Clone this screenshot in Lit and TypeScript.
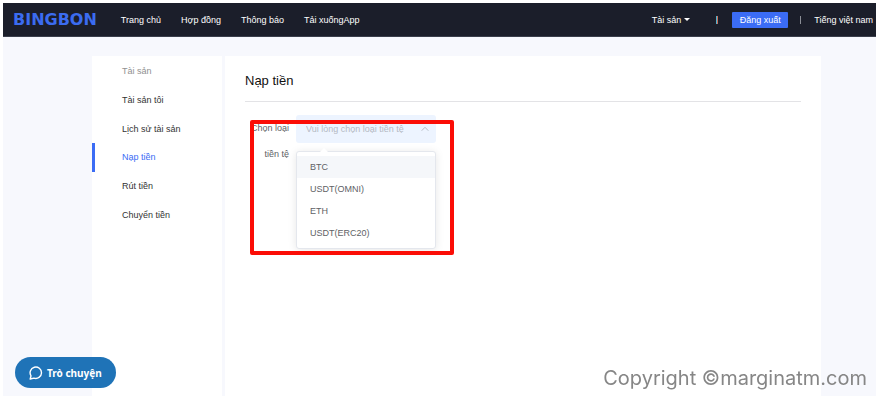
import { LitElement, html, css } from "lit";
import { customElement, state } from "lit/decorators.js";

@customElement("top-bar")
class TopBar extends LitElement {
  static styles = css`
    :host {
      display: block;
      background: #1b1e2a;
      border-bottom: 1px solid #3a3e4b;
    }
    header {
      display: flex;
      align-items: center;
      height: 33px;
      padding: 0 3px 0 10px;
      white-space: nowrap;
    }
    a {
      color: #fff;
      text-decoration: none;
    }
    .logo {
      font: 700 16px/18px "DejaVu Sans", sans-serif;
      color: #3b6cf0;
    }
    nav {
      display: flex;
      gap: 20px;
      margin-left: 24px;
    }
    .account {
      display: flex;
      align-items: center;
      margin-left: auto;
    }
    .menu {
      display: flex;
      align-items: center;
      gap: 3px;
    }
    .caret {
      border: 3px solid transparent;
      border-top-color: #fff;
      border-bottom: 0;
    }
    .bar {
      width: 1px;
      height: 8px;
      background: #8b8e96;
      margin: 0 13px 0 12px;
    }
    .bar.accent {
      border-left: 1px solid #4fb3cf;
      background: #c9705c;
      margin: 0 14px 0 26px;
    }
    button {
      height: 16px;
      width: 56px;
      padding: 0;
      border: 0;
      border-radius: 1px;
      background: #3b6cf5;
      color: #fff;
      font: inherit;
    }
  `;
  render() {
    return html`<header>
      <a class="logo" href="#">BINGBON</a>
      <nav>
        ${["Trang chủ", "Hợp đồng", "Thông báo", "Tải xuốngApp"].map((t) => html`<a href="#">${t}</a>`)}
      </nav>
      <div class="account">
        <a class="menu" href="#">Tài sản <span class="caret"></span></a>
        <span class="bar accent"></span>
        <button>Đăng xuất</button>
        <span class="bar"></span>
        <a href="#">Tiếng việt nam</a>
      </div>
    </header>`;
  }
}

@customElement("side-menu")
class SideMenu extends LitElement {
  static styles = css`
    :host {
      display: block;
      background: #fff;
      padding-top: 1px;
    }
    nav {
      display: grid;
      grid-auto-rows: 1fr;
      height: 172px;
    }
    .item {
      display: flex;
      align-items: center;
      padding-left: 27px;
      border-left: 3px solid transparent;
      color: #333;
      text-decoration: none;
    }
    .item.heading {
      color: #909090;
    }
    .item.active {
      color: #3b6cf5;
      border-left-color: #3b6cf5;
    }
  `;
  render() {
    return html`<nav>
      <span class="item heading">Tài sản</span>
      ${["Tài sản tôi", "Lịch sử tài sản", "Nạp tiền", "Rút tiền", "Chuyển tiền"].map(
        (t) => html`<a class="item ${t === "Nạp tiền" ? "active" : ""}" href="#">${t}</a>`
      )}
    </nav>`;
  }
}

const COINS = ["BTC", "USDT(OMNI)", "ETH", "USDT(ERC20)"];

@customElement("deposit-panel")
class DepositPanel extends LitElement {
  @state() coin = "";
  @state() hovered = "BTC";
  static styles = css`
    :host {
      display: block;
      background: #fff;
      padding: 0 20px;
    }
    h1 {
      margin: 0;
      padding: 16px 0 12px;
      font-size: 13px;
      line-height: 17px;
      font-weight: 400;
      color: #111;
      border-bottom: 1px solid #e3e3e6;
    }
    .field {
      position: relative;
      display: flex;
      margin-top: 13px;
    }
    label {
      width: 44px;
      margin-right: 7px;
      text-align: right;
      line-height: 26px;
      color: #606266;
    }
    .picker {
      position: relative;
      width: 140px;
      height: 28px;
    }
    select {
      appearance: none;
      width: 100%;
      height: 100%;
      padding: 0 20px 0 10px;
      border: 0;
      border-radius: 3px;
      background: #edf4ff;
      color: #b4b9c3;
      font: inherit;
    }
    .arrow {
      position: absolute;
      right: 7px;
      top: 10px;
      width: 8px;
      height: 8px;
    }
    .options {
      position: absolute;
      top: 36px;
      left: 0;
      right: 0;
      margin: 0;
      padding: 4px 0;
      list-style: none;
      background: #fff;
      border: 1px solid #e4e7ed;
      border-radius: 3px;
      box-shadow: 0 1px 8px #0000001a;
    }
    .options::before {
      content: "";
      position: absolute;
      top: -4px;
      left: 23px;
      border: 4px solid transparent;
      border-top: 0;
      border-bottom-color: #fff;
    }
    .option {
      height: 22px;
      line-height: 22px;
      padding-left: 13px;
      color: #606266;
      cursor: pointer;
    }
    .option.hover {
      background: #f5f7fa;
    }
    .marker {
      position: absolute;
      left: 5px;
      top: 5px;
      width: 196px;
      height: 127px;
      border: 4px solid #fb0d06;
      border-radius: 2px;
      pointer-events: none;
    }
  `;
  render() {
    return html`<h1>Nạp tiền</h1>
      <div class="field">
        <label for="coin">Chọn loại tiền tệ</label>
        <div class="picker">
          <select id="coin" @change=${(e: Event) => (this.coin = (e.target as HTMLSelectElement).value)}>
            <option value="">Vui lòng chọn loại tiền tệ</option>
            ${COINS.map((c) => html`<option value=${c} ?selected=${c === this.coin}>${c}</option>`)}
          </select>
          <svg class="arrow" viewBox="0 0 8 8" fill="none" stroke="#b4b9c3"><path d="M.7 5.7 4 2.3l3.3 3.4" /></svg>
          <ul class="options" role="listbox" aria-label="Chọn loại tiền tệ">
            ${COINS.map(
              (c) => html`<li
                role="option"
                aria-selected=${c === this.coin}
                class="option ${c === this.hovered ? "hover" : ""}"
                @mouseenter=${() => (this.hovered = c)}
                @click=${() => (this.coin = c)}
              >${c}</li>`
            )}
          </ul>
        </div>
        <div class="marker"></div>
      </div>`;
  }
}

@customElement("app-root")
class AppRoot extends LitElement {
  static styles = css`
    :host {
      display: flex;
      flex-direction: column;
      box-sizing: border-box;
      min-height: 100vh;
      padding: 3px 3px 5px;
      background: #fff;
      font: 9px/12px "Liberation Sans", Arial, sans-serif;
    }
    main {
      flex: 1;
      display: grid;
      grid-template-columns: 130px 1fr;
      gap: 3px;
      padding: 19px 55px 0 89px;
      background: #f7f8fd;
    }
    .chat {
      position: fixed;
      left: 15px;
      bottom: 13px;
      display: flex;
      align-items: center;
      gap: 4px;
      height: 31px;
      padding: 0 14px;
      border: 0;
      border-radius: 16px;
      background: #1f73b7;
      color: #fff;
      font: 700 10px/14px "Noto Sans", sans-serif;
    }
    .chat svg {
      width: 14px;
      height: 14px;
    }
    .copyright {
      position: fixed;
      right: 12px;
      bottom: 11px;
      font: 20px/24px Inter, sans-serif;
      color: #868686;
    }
  `;
  render() {
    return html`<top-bar></top-bar>
      <main>
        <side-menu></side-menu>
        <deposit-panel></deposit-panel>
      </main>
      <button class="chat">
        <svg viewBox="0 0 14 14" fill="none" stroke="#fff" stroke-width="1.4" stroke-linejoin="round">
          <path d="M2 9.800A5.700 5.700 0 1 1 4.900 12.100L1.200 13z" />
        </svg>
        Trò chuyện
      </button>
      <div class="copyright">Copyright ©marginatm.com</div>`;
  }
}
